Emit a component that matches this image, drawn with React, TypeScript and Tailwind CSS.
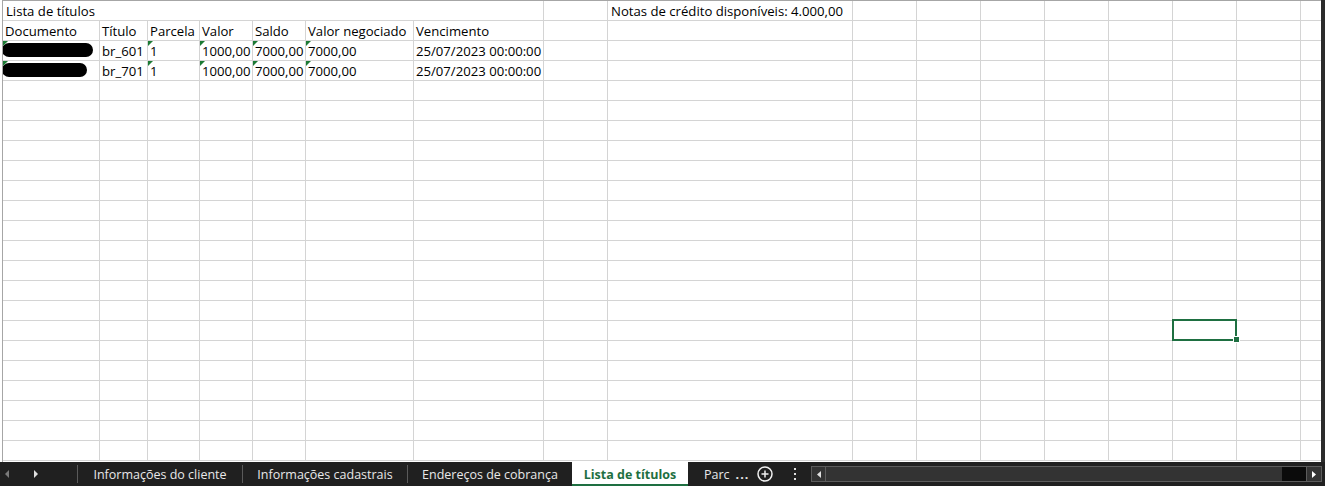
import React from "react";

const TAIL = [
  "w-[64px]",
  "w-[64px]",
  "w-[64px]",
  "w-[64px]",
  "w-[64px]",
  "w-[64px]",
  "w-[64px]",
];

const MAIN = [
  "w-[97px]",
  "w-[48px]",
  "w-[52px]",
  "w-[53px]",
  "w-[53px]",
  "w-[108px]",
  "w-[130px]",
  "w-[64px]",
  "w-[245px]",
];

const cellBase =
  "shrink-0 h-full border-r border-[#d4d4d4] relative whitespace-nowrap overflow-visible pl-[2px] pt-[1px]";

function Tri() {
  return (
    <span className="absolute top-0 left-0 w-0 h-0 border-t-[5px] border-r-[5px] border-t-[#1b7a34] border-r-transparent z-10" />
  );
}

function Rest({ selected }: { selected?: boolean }) {
  return (
    <>
      {TAIL.map((w, i) => (
        <div key={i} className={`${w} ${cellBase}`}>
          {selected && i === 5 ? (
            <>
              <span className="absolute -top-[2px] -left-[1px] w-[65px] h-[22px] border-2 border-[#1e6f41] z-20" />
              <span className="absolute -bottom-[3px] right-[-4px] w-[5px] h-[5px] bg-[#1e6f41] border border-white z-30 box-content" />
            </>
          ) : null}
        </div>
      ))}
      <div className="w-[20px] shrink-0 h-full" />
    </>
  );
}

type Cell = { t?: string; tri?: boolean; pill?: number };

const rows: Cell[][] = [
  [
    { t: "Documento" },
    { t: "Título" },
    { t: "Parcela" },
    { t: "Valor" },
    { t: "Saldo" },
    { t: "Valor negociado" },
    { t: "Vencimento" },
    {},
    {},
  ],
  [
    { tri: true, pill: 91 },
    { t: "br_601" },
    { t: "1", tri: true },
    { t: "1000,00", tri: true },
    { t: "7000,00", tri: true },
    { t: "7000,00", tri: true },
    { t: "25/07/2023 00:00:00" },
    {},
    {},
  ],
  [
    { tri: true, pill: 85 },
    { t: "br_701" },
    { t: "1", tri: true },
    { t: "1000,00", tri: true },
    { t: "7000,00", tri: true },
    { t: "7000,00", tri: true },
    { t: "25/07/2023 00:00:00" },
    {},
    {},
  ],
];

function DataRow({ cells }: { cells: Cell[] }) {
  return (
    <div className="flex h-[20px] border-b border-[#d4d4d4] shrink-0">
      {cells.map((c, i) => (
        <div key={i} className={`${MAIN[i]} ${cellBase}`}>
          {c.pill ? (
            <span
              className={`absolute left-[-1px] top-[2px] h-[14px] rounded-full bg-black ${
                c.pill === 91 ? "w-[91px]" : "w-[85px]"
              }`}
            />
          ) : null}
          {c.tri ? <Tri /> : null}
          {c.t ? <span className="relative">{c.t}</span> : null}
        </div>
      ))}
      <Rest />
    </div>
  );
}

function EmptyRow({ selected }: { selected?: boolean }) {
  return (
    <div className="flex h-[20px] border-b border-[#d4d4d4] shrink-0 relative">
      {selected ? (
        <span className="absolute left-[-1px] top-0 w-[1px] h-[19px] bg-[#1e6f41]" />
      ) : null}
      {MAIN.map((w, i) => (
        <div key={i} className={`${w} ${cellBase}`} />
      ))}
      <Rest selected={selected} />
    </div>
  );
}

export default function App() {
  const empties = Array.from({ length: 19 }, (_, i) => i);
  return (
    <div className="w-[1325px] h-[486px] bg-white overflow-hidden flex flex-col font-['Open_Sans',sans-serif] text-[13.15px] leading-[19px] text-black">
      <div className="flex h-[462px] shrink-0">
        <div className="w-[2px] shrink-0" />
        <div className="flex-1 border-l border-t border-[#a6a6a6] flex flex-col relative overflow-hidden">
          <span className="absolute top-[-1px] left-[1170px] w-[65px] h-[1px] bg-[#1e6f41]" />
          {/* Row 1 */}
          <div className="flex h-[20px] border-b border-[#d4d4d4] shrink-0">
            <div className={`w-[541px] ${cellBase}`}>
              <span className="pl-[1px]">Lista de títulos</span>
            </div>
            <div className={`w-[64px] ${cellBase}`} />
            <div className={`w-[245px] ${cellBase}`}>
              <span className="pl-[1px]">Notas de crédito disponíveis: 4.000,00</span>
            </div>
            <Rest />
          </div>
          {rows.map((r, i) => (
            <DataRow key={i} cells={r} />
          ))}
          {empties.map((i) => (
            <EmptyRow key={i} selected={i === 12} />
          ))}
        </div>
        <div className="w-[4px] shrink-0 bg-[#2b2b2b]" />
      </div>
      {/* bottom bar */}
      <div className="h-[24px] shrink-0 bg-[#202020] flex items-center font-['Open_Sans',sans-serif] text-[12.5px] text-[#e8e8e8]">
        <div className="w-[77px] h-full flex items-center shrink-0">
          <svg width="5" height="8" viewBox="0 0 5 8" className="ml-[5px]">
            <path d="M4 0 L0 4 L4 8 Z" fill="#7a7a7a" />
          </svg>
          <svg width="5" height="8" viewBox="0 0 5 8" className="ml-[24px]">
            <path d="M0 0 L4 4 L0 8 Z" fill="#e0e0e0" />
          </svg>
        </div>
        <div className="w-[1px] h-[18px] bg-[#5a5a5a] shrink-0" />
        <div className="w-[164px] h-full flex items-center justify-center shrink-0">
          Informações do cliente
        </div>
        <div className="w-[1px] h-[18px] bg-[#5a5a5a] shrink-0" />
        <div className="w-[164px] h-full flex items-center justify-center shrink-0">
          Informações cadastrais
        </div>
        <div className="w-[1px] h-[18px] bg-[#5a5a5a] shrink-0" />
        <div className="w-[164px] h-full flex items-center justify-center shrink-0">
          Endereços de cobrança
        </div>
        <div className="w-[116px] h-full flex items-center justify-center shrink-0 bg-white text-[#1e6f41] font-bold border-b-2 border-[#1e6f41] pt-[2px]">
          Lista de títulos
        </div>
        <div className="w-[64px] h-full flex items-center shrink-0 pl-[16px]">
          <span>Parc</span>
          <span className="ml-[6px] font-bold tracking-[1px]">...</span>
        </div>
        <div className="w-[26px] h-full flex items-center justify-center shrink-0">
          <svg width="16" height="16" viewBox="0 0 16 16" fill="none" stroke="#f0f0f0" strokeWidth="1.5">
            <circle cx="8" cy="8" r="7" />
            <path d="M8 4.5v7M4.5 8h7" />
          </svg>
        </div>
        <div className="w-[33px] h-full flex items-center justify-center shrink-0">
          <svg width="4" height="14" viewBox="0 0 4 14" fill="#e0e0e0">
            <rect x="1" y="1" width="2" height="2" />
            <rect x="1" y="6" width="2" height="2" />
            <rect x="1" y="11" width="2" height="2" />
          </svg>
        </div>
        <div className="flex-1 h-[16px] flex mr-[3px] border border-[#5c5c5c] bg-[#333333]">
          <div className="w-[14px] h-full flex items-center justify-center border-r border-[#5c5c5c]">
            <svg width="4" height="7" viewBox="0 0 4 7">
              <path d="M4 0 L0 3.5 L4 7 Z" fill="#e0e0e0" />
            </svg>
          </div>
          <div className="flex-1" />
          <div className="w-[24px] h-full bg-[#0b0b0b]" />
          <div className="w-[15px] h-full flex items-center justify-center border-l border-[#5c5c5c]">
            <svg width="4" height="7" viewBox="0 0 4 7">
              <path d="M0 0 L4 3.5 L0 7 Z" fill="#ffffff" />
            </svg>
          </div>
        </div>
      </div>
    </div>
  );
}
